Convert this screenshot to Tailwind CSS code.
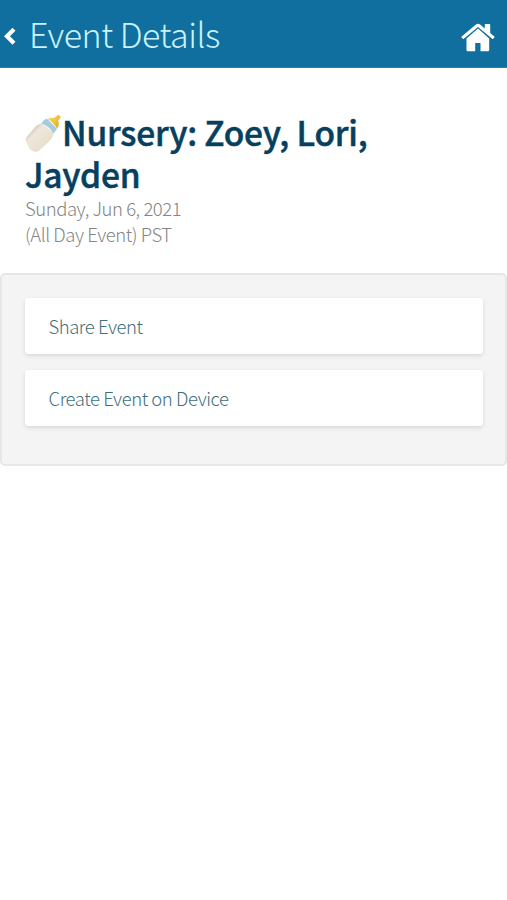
<!DOCTYPE html>
<html lang="en">
<head>
<meta charset="utf-8">
<title>Event Details</title>
<script src="https://cdn.jsdelivr.net/npm/@tailwindcss/browser@4"></script>
</head>
<body class="min-h-screen bg-white font-['Noto_Sans_CJK_JP','Noto_Sans',sans-serif]">
<header class="flex h-[68px] items-start bg-[#106f9e] pl-1 pr-3 border-b border-[#2d7ea7]">
  <svg class="mt-[27px] h-[19px] w-3 shrink-0" viewBox="0 0 12 19" fill="none" stroke="#fff" stroke-width="4.2"><path d="M10 2.300 3 9.300l7 7"/></svg>
  <h1 class="ml-[13px] mt-[10px] flex-1 whitespace-nowrap text-[34px] leading-[48px] tracking-[-0.5px] font-light text-[#c9f3ff]"><span>Event Details</span></h1>
  <svg class="mt-[23px] h-[29px] w-[34px] shrink-0" viewBox="0 0 34 29" fill="#fff"><path d="M17 5.500 5.500 15.400V27q0 1.300 1.300 1.300h7.400v-8.200h5.300v8.200h7.400q1.300 0 1.300-1.300V15.400z"/><path d="M14.600 1.700Q17-.2 19.400 1.700l4.400 3.700V1.600q0-.7.7-.7h4q.7 0 .7.7v8.300l4.100 3.500q.5.5.1 1l-1.200 1.300q-.5.5-1 .1L17 4 2.800 15.800q-.5.4-1-.1L.6 14.400q-.4-.5.1-1z"/></svg>
</header>
<main>
  <section class="px-[25px] pt-[43px]">
    <h2 class="h-[84px] text-[33.5px] leading-[41.5px] tracking-[-0.2px] font-medium [-webkit-text-stroke:0.5px_#07405f] text-[#07405f]"><svg class="-my-2 mr-[1px] inline-block h-[40px] w-[36px] align-[0px]" viewBox="0 0 36 40"><defs><linearGradient id="milk" x1="0" y1="0" x2="1" y2="1"><stop stop-color="#a9a69c"/><stop offset=".35" stop-color="#eee7da"/><stop offset=".7" stop-color="#e9e0d1"/><stop offset="1" stop-color="#b9ad9a"/></linearGradient><linearGradient id="teat" x1="0" y1="0" x2="1" y2="1"><stop stop-color="#ffdf6c"/><stop offset="1" stop-color="#dfa31c"/></linearGradient></defs><path d="M16.500 9.500Q13 9.500 11 12L1.500 23Q.3 25 1 27.300l3.500 7.500q3.800 4.800 9 2.500L25.500 26q2.800-3.200 3.300-7.500z" fill="url(#milk)"/><path d="M16.500 9.500q2.200-4 5.500-4.700l10 10-3.300 4.700Q24.500 12.500 16.500 9.500z" fill="#a5cadb"/><path d="M22.800 5.200q2.200-2 4.800-1.300 2.400-.1 3.800-1.700l1-1q3-.7 3.300 2.400l-2.400 3q1.400 4.500-1.200 8Q28.500 8.500 22.800 5.200z" fill="url(#teat)"/></svg>Nursery: Zoey, Lori,<br>Jayden</h2>
    <p class="text-[18.5px] leading-[26px] tracking-[-0.46px] font-light text-[#858585]"><span>Sunday, Jun 6, 2021</span><br><span>(All Day Event) PST</span></p>
  </section>
  <section class="mt-[26px] flex h-[193px] flex-col gap-4 rounded-[5px] border-2 border-[#e7e7e7] bg-[#f4f4f4] pl-[23px] pr-[22px] pt-[23px]">
    <button class="h-14 w-full rounded-[3px] bg-white pb-px px-[23.5px] text-left text-[18.5px] leading-6 tracking-[-0.46px] font-light text-[#3f6f7a] shadow-[0_2px_4px_#0000001c]"><span>Share Event</span></button>
    <button class="h-14 w-full rounded-[3px] bg-white pb-px px-[23.5px] text-left text-[18.5px] leading-6 tracking-[-0.46px] font-light text-[#3f6f7a] shadow-[0_2px_4px_#0000001c]"><span>Create Event on Device</span></button>
  </section>
</main>
</body>
</html>
